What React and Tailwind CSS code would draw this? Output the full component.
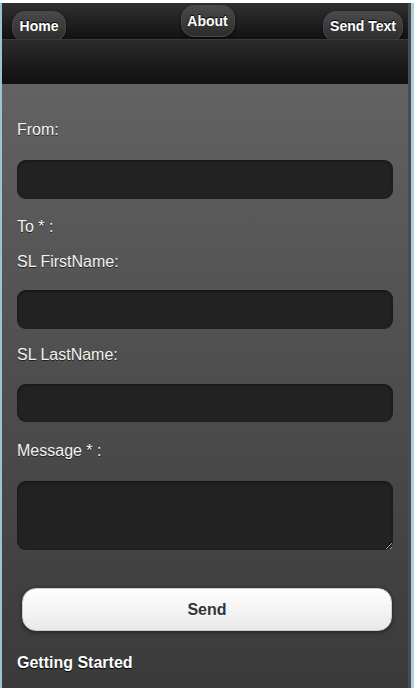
const navBtn =
  'flex items-center justify-center rounded-[13px] border border-[#4a4a4a] bg-gradient-to-b from-[#4a4a4a] to-[#2c2c2c] text-[14px] font-bold text-white shadow-[0_1px_3px_rgba(0,0,0,0.6)] [text-shadow:0_-1px_1px_#000]';

const fieldLabel = 'text-[16px] leading-[20px] text-[#f2f2f2] [text-shadow:0_1px_0_#222]';
const fieldBox = 'w-full rounded-[9px] bg-[#222222] shadow-[inset_0_1px_3px_rgba(0,0,0,0.5)]';

export default function App() {
  return (
    <div
      className="flex h-[688px] w-[414px] flex-col overflow-hidden bg-white"
      style={{ fontFamily: '"Liberation Sans", Arial, sans-serif' }}
    >
      <div className="h-[3px] bg-white" />
      <div className="flex flex-1">
        {/* left frame edge */}
        <div className="w-[2px] bg-[#9cc4d8]" />

        <div className="flex flex-1 flex-col">
          {/* Toolbar */}
          <div className="flex h-[36px] items-start overflow-hidden bg-gradient-to-b from-[#303030] to-[#121212] pl-[10px] pr-[5px]">
            <div className="flex flex-1">
              <button className={`${navBtn} mt-[8px] h-[31px] w-[54px]`}>Home</button>
            </div>
            <button className={`${navBtn} mt-[2px] h-[32px] w-[54px]`}>About</button>
            <div className="flex flex-1 justify-end">
              <button className={`${navBtn} mt-[8px] h-[31px] w-[80px]`}>Send Text</button>
            </div>
          </div>

          {/* Sub bar */}
          <div className="h-[45px] border-t border-[#3a3a3a] bg-gradient-to-b from-[#2c2c2c] to-[#101010]" />

          {/* Form body */}
          <div className="flex flex-1 flex-col bg-gradient-to-b from-[#626262] to-[#3a3a3a] px-[15px] pt-[36px]">
            <label className={fieldLabel}>From:</label>
            <input className={`${fieldBox} mt-[20px] h-[39px]`} />

            <label className={`${fieldLabel} mt-[18px]`}>To * :</label>

            <label className={`${fieldLabel} mt-[15px]`}>SL FirstName:</label>
            <input className={`${fieldBox} mt-[18px] h-[39px]`} />

            <label className={`${fieldLabel} mt-[16px]`}>SL LastName:</label>
            <input className={`${fieldBox} mt-[19px] h-[38px]`} />

            <label className={`${fieldLabel} mt-[19px]`}>Message * :</label>
            <textarea className={`${fieldBox} mt-[20px] h-[69px] resize-y`} />

            <button className="ml-[5px] mr-[1px] mt-[38px] h-[43px] rounded-[14px] border border-[#ccc] bg-gradient-to-b from-white to-[#e9e9e9] text-[16px] font-bold text-[#333] shadow-[0_1px_4px_rgba(0,0,0,0.5)] [text-shadow:0_1px_0_#fff]">
              Send
            </button>

            <h3 className="mt-[22px] text-[16px] font-bold leading-[20px] text-white [text-shadow:0_1px_1px_#000]">
              Getting Started
            </h3>
          </div>
        </div>

        {/* right edge */}
        <div className="w-[3px] bg-[#4a4a4a]" />
        <div className="w-[3px] bg-[#a9cfe0]" />
      </div>
    </div>
  );
}
